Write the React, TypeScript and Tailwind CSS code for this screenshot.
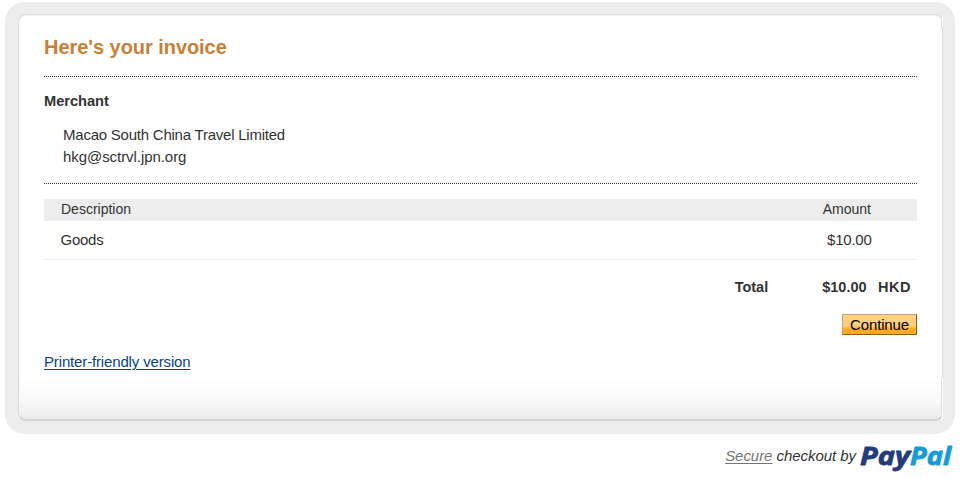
import React from "react";

const items = [{ description: "Goods", amount: "$10.00" }];

function DottedLine() {
  return (
    <div className="h-px bg-[repeating-linear-gradient(90deg,#333_0_1px,#fff_1px_2px)]" />
  );
}

function PayPalLogo() {
  return (
    <svg width="95" height="32" viewBox="0 0 95 32" className="shrink-0 overflow-visible">
      <g
        fontFamily="'Open Sans', sans-serif"
        fontWeight="700"
        fontStyle="italic"
        fontSize="25"
        strokeWidth="0.8"
        strokeLinejoin="round"
      >
        <text x="0" y="21.2" textLength="50" lengthAdjust="spacingAndGlyphs" fill="#253b80" stroke="#253b80">
          Pay
        </text>
        <text x="50" y="21.2" textLength="41" lengthAdjust="spacingAndGlyphs" fill="#179bd7" stroke="#179bd7">
          Pal
        </text>
      </g>
    </svg>
  );
}

function Invoice() {
  return (
    <div className="relative flex h-[407px] flex-col rounded-lg border border-[#dcdcdc] border-b-2 border-b-[#d3d3d3] bg-white bg-[linear-gradient(#fff_0_362px,#f8f8f8_388px,#ececec_404px)] px-[25px] text-[15px] leading-[22px] shadow-[inset_0_1px_1px_#f1f1f1]">
      {/* light seams where the corner pieces meet the right edge */}
      <span className="absolute top-0 -right-px h-3 w-px bg-white" />
      <span className="absolute top-1.5 right-0 h-[7px] w-px bg-[#dcdcdc]" />
      <span className="absolute -right-px bottom-0 h-[41px] w-px bg-white" />
      <span className="absolute right-0 bottom-1.5 h-[35px] w-px bg-[#dcdcdc]" />
      <h1 className="mt-5 text-[20px] leading-6 font-bold tracking-[-0.05px] text-[#c88039]">
        Here's your invoice
      </h1>
      <div className="mt-[17px]">
        <DottedLine />
      </div>
      <h2 className="mt-[13px] text-[14.6px] font-bold">Merchant</h2>
      <div className="mt-3 pl-[19px]">
        <p className="tracking-[-0.23px]">Macao South China Travel Limited</p>
        <p className="tracking-[-0.06px]">hkg@sctrvl.jpn.org</p>
      </div>
      <div className="mt-[15px]">
        <DottedLine />
      </div>
      <div className="mt-[15px] flex h-[22px] justify-between bg-[#ededed] pr-[46px] pl-[17px] text-[14px] leading-[21px]">
        <span>Description</span>
        <span>Amount</span>
      </div>
      {items.map((item) => (
        <div
          key={item.description}
          className="flex h-[39px] justify-between border-b border-[#ededed] pt-2 pr-[45.5px] pl-[16.5px] tracking-[-0.25px]"
        >
          <span>{item.description}</span>
          <span>{item.amount}</span>
        </div>
      ))}
      <div className="mt-4 flex justify-end pr-[6px] text-[14.5px] font-bold">
        <span>Total</span>
        <span className="ml-[54px]">$10.00</span>
        <span className="ml-[11.5px] tracking-[0.5px]">HKD</span>
      </div>
      <button className="mt-4 h-[21px] w-[75px] self-end border border-t-[#bfa779] border-r-[#915c0d] border-b-[#915c0d] border-l-[#bfa779] bg-[linear-gradient(#ffcf80_0_11px,#ffa822_14px)] text-[15px] leading-[19px] tracking-[-0.15px] text-black">
        Continue
      </button>
      <a
        href="#"
        className="mt-4 self-start tracking-[-0.15px] text-[#084482] underline underline-offset-2"
      >
        Printer-friendly version
      </a>
    </div>
  );
}

export default function App() {
  return (
    <div className="h-[478px] w-[963px] overflow-hidden bg-white pt-[2px] pl-[5px] font-['Liberation_Sans',Arial,sans-serif] text-[#333]">
      <div className="h-[432px] w-[950px] rounded-[20px] bg-[#ededed] pt-3 pr-3 pl-[13px]">
        <Invoice />
      </div>
      <div className="mt-[10px] flex w-[950px] justify-end text-[15px] leading-6 italic">
        <p className="mr-1 tracking-[-0.05px]">
          <a href="#" className="text-[#757575] underline underline-offset-2">
            Secure
          </a>{" "}
          checkout by
        </p>
        <PayPalLogo />
      </div>
    </div>
  );
}
